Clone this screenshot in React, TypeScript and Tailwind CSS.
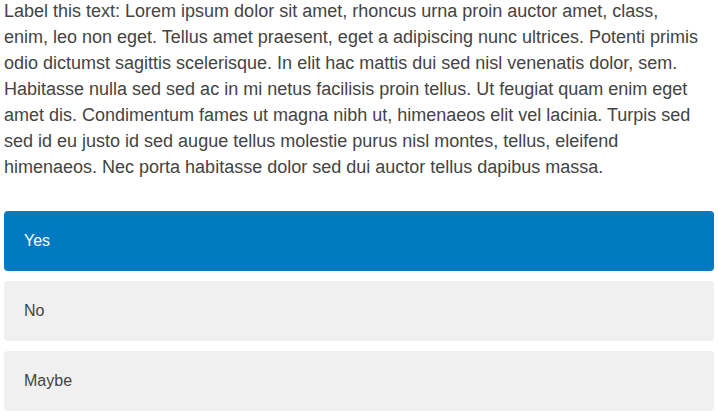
const options = ["Yes", "No", "Maybe"];

export default function App() {
  const selected = "Yes";

  return (
    <div className="px-1 font-['Liberation_Sans',Arial,sans-serif] text-[#444]">
      <p className="-mt-[2px] text-[18px] leading-[26px]">
        Label this text: Lorem ipsum dolor sit amet, rhoncus urna proin auctor amet, class,
        <br />
        enim, leo non eget. Tellus amet praesent, eget a adipiscing nunc ultrices. Potenti primis odio dictumst sagittis
        scelerisque. In elit hac mattis dui sed nisl venenatis dolor, sem. Habitasse nulla sed sed ac in mi netus
        facilisis proin tellus. Ut feugiat quam enim eget amet dis. Condimentum fames ut magna nibh ut, himenaeos elit vel
        lacinia. Turpis sed sed id eu justo id sed augue tellus molestie purus nisl montes, tellus, eleifend himenaeos.
        Nec porta habitasse dolor sed dui auctor tellus dapibus massa.
      </p>
      <div className="mt-[31px] flex flex-col gap-[10px]">
        {options.map((opt) => (
          <button
            key={opt}
            type="button"
            className={
              opt === selected
                ? "flex h-[60px] items-center rounded bg-[#007bc2] px-5 text-left text-[16px] text-white"
                : "flex h-[60px] items-center rounded bg-[#f0f0f0] px-5 text-left text-[16px] text-[#444]"
            }
          >
            {opt}
          </button>
        ))}
      </div>
    </div>
  );
}
